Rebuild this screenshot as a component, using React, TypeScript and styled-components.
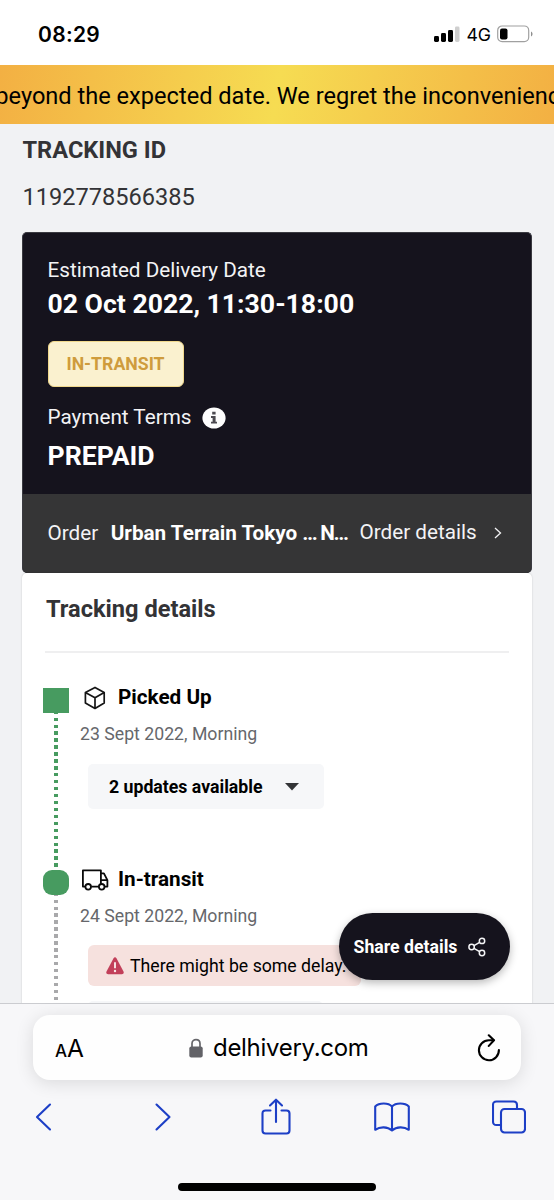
import React from 'react';
import styled, { createGlobalStyle } from 'styled-components';

const Global = createGlobalStyle`
  * { box-sizing: border-box; }
  body { margin: 0; background: #f1f2f4; font-family: Roboto, "Liberation Sans", sans-serif; }
  svg { display: block; flex: none; }
`;

const Screen = styled.div`
  position: relative;
  width: 554px;
  height: 1200px;
  overflow: hidden;
  display: flex;
  flex-direction: column;
  background: #f1f2f4;
`;

const Text = styled.div<{ $size: number; $line: number; $weight?: number; $color?: string; $spacing?: number }>`
  font-size: ${p => p.$size}px;
  line-height: ${p => p.$line}px;
  font-weight: ${p => p.$weight ?? 400};
  color: ${p => p.$color ?? '#000'};
  letter-spacing: ${p => p.$spacing ?? 0}px;
  white-space: nowrap;
`;

const StatusBar = styled.header`
  flex: none;
  height: 65px;
  padding: 20px 21px 0 38px;
  display: flex;
  justify-content: space-between;
  align-items: flex-start;
  background: #fff;
  font-family: Inter, sans-serif;
`;

const StatusIcons = styled.div`
  height: 28px;
  display: flex;
  align-items: center;
`;

const Network = styled(Text)`
  margin: 1px 6px 0 6px;
`;

const Banner = styled.div`
  flex: none;
  height: 59px;
  padding: 3px 0 0 14px;
  display: flex;
  align-items: center;
  justify-content: center;
  overflow: hidden;
  background: linear-gradient(100deg, #f3b043 0%, #f6dc52 50%, #f3b043 100%);
`;

const Content = styled.main`
  flex: 1;
  min-height: 0;
  overflow: hidden;
  padding: 11px 22px 0;
`;

const IdBlock = styled.section`
  height: 97px;
  padding-left: 0.5px;
  display: flex;
  flex-direction: column;
  gap: 17px;
`;

const SummaryCard = styled.section`
  height: 341px;
  border-radius: 5px;
  overflow: hidden;
  background: #15131d;
  border: 1px solid #3a3a40;
  border-width: 1px 1px 0;
`;

const SummaryBody = styled.div`
  height: 261px;
  padding: 22px 25px 0 24.5px;
  display: flex;
  flex-direction: column;
  align-items: flex-start;
`;

const Badge = styled.div`
  width: 136px;
  height: 46px;
  margin: 19px 0 16px 0;
  display: flex;
  align-items: center;
  justify-content: center;
  border: 1.5px solid #f0d88c;
  border-radius: 6px;
  background: #faf1cf;
`;

const TermsRow = styled.div`
  display: flex;
  align-items: center;
  gap: 10px;
  margin-bottom: 10px;
`;

const OrderBar = styled.div`
  height: 79px;
  padding: 0 29px 2px 24.5px;
  display: flex;
  align-items: center;
  background: #353536;
`;

const OrderName = styled(Text)`
  margin: 0 12px 0 12.5px;
`;

const Truncated = styled.span`
  letter-spacing: -1.3px;
`;

const OrderLink = styled(Text)`
  margin-top: -2px;
`;

const Chevron = styled.span`
  margin-left: auto;
`;

const DetailsCard = styled.section`
  height: 440px;
  padding: 22px 23px 0 21px;
  background: #fff;
  border-radius: 5px 5px 0 0;
  box-shadow: 0 0 2px rgba(0, 0, 0, 0.18);
`;

const Heading = styled.div`
  height: 58px;
  margin-left: 2px;
  padding-left: 1px;
  border-bottom: 2px solid #efeff0;
`;

const Step = styled.article`
  display: flex;
  height: 182px;
`;

const Timeline = styled.div`
  padding-top: 35px;
  margin-bottom: -35px;
  width: 26px;
  display: flex;
  flex-direction: column;
  align-items: center;
`;

const Marker = styled.span<{ $round?: boolean }>`
  flex: none;
  width: 26px;
  height: 25px;
  border-radius: ${p => (p.$round ? 9 : 0)}px;
  background: #479b60;
`;

const Dots = styled.span<{ $color: string }>`
  flex: 1;
  width: 4px;
  background: repeating-linear-gradient(to bottom, ${p => p.$color} 0 1px, transparent 1px 4.6px, ${p => p.$color} 4.6px 6.94px);
`;

const StepBody = styled.div`
  padding: 31px 0 0 11px;
`;

const StepTitle = styled.div`
  display: flex;
  align-items: center;
  height: 26px;
`;

const IconSlot = styled.span`
  width: 38px;
  padding-top: 2px;
  display: flex;
`;

const StepDate = styled(Text)`
  margin-top: 12px;
`;

const Updates = styled.div`
  width: 236px;
  height: 45px;
  margin: 18px 0 0 8px;
  padding: 0 25px 0 21px;
  display: flex;
  align-items: center;
  justify-content: space-between;
  border-radius: 5px;
  background: #f6f7f9;
`;

const Alert = styled.div`
  width: 273px;
  height: 41px;
  margin: 17px 0 0 8px;
  padding-left: 18px;
  display: flex;
  align-items: center;
  gap: 6px;
  border-radius: 6px;
  background: #f6e1de;
`;

const NextPanel = styled.div`
  width: 235px;
  height: 20px;
  margin: 15px 0 0 8px;
  border-radius: 5px;
  background: #f6f7f9;
`;

const ShareButton = styled.button`
  position: absolute;
  left: 339px;
  top: 913px;
  width: 170.5px;
  height: 67px;
  padding: 0 24px 0 14.5px;
  display: flex;
  align-items: center;
  justify-content: space-between;
  border: 0;
  border-radius: 34px;
  background: #15131d;
  font-family: inherit;
  box-shadow: 0 3px 8px rgba(0, 0, 0, 0.28);
`;

const Browser = styled.footer`
  flex: none;
  height: 197px;
  padding: 11px 28px 0 33px;
  border-top: 1px solid #cbccd0;
  background: #f7f7f9;
  font-family: Inter, sans-serif;
`;

const AddressBar = styled.div`
  height: 65px;
  width: 488px;
  padding: 0 20px 0 22px;
  display: flex;
  align-items: center;
  justify-content: space-between;
  border-radius: 17px;
  background: #fefefe;
  box-shadow: 0 3px 18px rgba(0, 0, 0, 0.12);
`;

const TextSize = styled.div`
  display: flex;
  align-items: baseline;
  width: 134px;
  padding-top: 3px;
`;

const Host = styled.div`
  display: flex;
  align-items: center;
  gap: 10px;
  margin-right: auto;
`;

const Toolbar = styled.nav`
  height: 74px;
  width: 582px;
  margin-left: -48px;
  display: grid;
  grid-template-columns: repeat(5, 1fr);
  align-items: center;
  justify-items: center;
`;

const HomeIndicator = styled.div`
  width: 198px;
  height: 8px;
  margin: 29px 0 0 145px;
  border-radius: 4px;
  background: #000;
`;

const Signal = () => (
  <svg width="26" height="16" viewBox="0 0 26 16">
    <rect x="0" y="10" width="5" height="6" rx="1.4" />
    <rect x="7" y="7" width="5" height="9" rx="1.4" />
    <rect x="14" y="4" width="5" height="12" rx="1.4" />
    <rect x="21" y="0.5" width="4.5" height="15.5" rx="1.4" fill="#cfcfcf" />
  </svg>
);

const Battery = () => (
  <svg width="36" height="18" viewBox="0 0 36 18">
    <rect x="0.7" y="1" width="31" height="15.6" rx="4.4" fill="#fff" stroke="#a0a0a0" strokeWidth="1.2" />
    <rect x="3" y="3.4" width="7.5" height="11" rx="2" />
    <path d="M34 6.4c2 .8 2 4.2 0 5z" fill="#8f8f8f" />
  </svg>
);

const Info = () => (
  <svg width="24" height="24" viewBox="0 -2 24 24">
    <ellipse cx="12" cy="11" rx="11.6" ry="10.6" fill="#fdfdfd" />
    <path d="M10.2 4.8h3.4v2.7h-3.4zM9 9.1h4.6v5.6H15v1.9H9v-1.9h1.6V11H9z" fill="#4c4a50" />
  </svg>
);

const Box = () => (
  <svg width="22" height="24" viewBox="0 0 22 24" fill="none" stroke="#151515" strokeWidth="1.7" strokeLinejoin="round" style={{ marginLeft: 4 }}>
    <path d="M11 1.4 20.2 6.4V17L11 22.4 1.4 17V6.4zM1.4 6.6 11 11.8l9.2-5.2M11 11.8v10.4" />
  </svg>
);

const Truck = () => (
  <svg width="28" height="22" viewBox="0 0 28 22" fill="none" stroke="#0a0a0a" strokeWidth="1.8" strokeLinejoin="round" style={{ marginLeft: 1 }}>
    <path d="M4.2 17.6H1.9V1.4h18v16.2h-9.6M19.9 4.3h3l3.5 6.9v6.4h-2.6M19.9 11.2h6.3" />
    <circle cx="7.2" cy="17.8" r="2.8" fill="#fff" />
    <circle cx="20.7" cy="17.8" r="2.8" fill="#fff" />
  </svg>
);

const Warning = () => (
  <svg width="18" height="18" viewBox="0 0 18 18">
    <path d="M7.4 1.4q1.6-2.2 3.2 0l6.9 13.2q.9 2.6-1.6 2.7H2.1Q-.4 17.2 .5 14.6z" fill="#c2405a" />
    <path d="M9 5.2v6" stroke="#f9e9e8" strokeWidth="1.9" />
    <circle cx="9" cy="14" r="1.2" fill="#f9e9e8" />
  </svg>
);

const Share = () => (
  <svg width="18" height="20" viewBox="0 0 18 20" fill="none" stroke="#f4f4f6" strokeWidth="1.5">
    <circle cx="3.6" cy="10" r="2.7" />
    <circle cx="14" cy="3.9" r="2.7" />
    <circle cx="14" cy="16" r="2.7" />
    <path d="m6 8.6 5.6-3.3M6 11.4l5.6 3.3" />
  </svg>
);

const Lock = () => (
  <svg width="14" height="20" viewBox="0 0 14 20">
    <path d="M3 9.5V5.5C3 .2 11 .2 11 5.5v4" fill="none" stroke="#66666a" strokeWidth="1.7" />
    <rect x="0.3" y="8.6" width="13.4" height="11" rx="2" fill="#626267" />
  </svg>
);

const Reload = () => (
  <svg width="24" height="28" viewBox="0 0 24 28" fill="none" stroke="#000" strokeWidth="2.1" strokeLinecap="round" strokeLinejoin="round">
    <path d="M21.9 16A10 10 0 1 1 11.9 6.2H16.5" />
    <path d="m11.8 1.3 5.2 5-5.2 5.6" />
  </svg>
);

const blue = { fill: 'none', stroke: '#1d3fc6', strokeWidth: 2.1, strokeLinecap: 'round', strokeLinejoin: 'round' } as const;

const Back = () => (
  <svg width="18" height="28" viewBox="0 0 18 28" {...blue}><path d="M16 1.5 3 14l13 12.5" /></svg>
);
const Forward = () => (
  <svg width="24" height="28" viewBox="-6 0 24 28" {...blue}><path d="m2.5 1.5 13 12.5-13 12.5" /></svg>
);
const Upload = () => (
  <svg width="30" height="38" viewBox="0 0 30 38" {...blue}>
    <path d="M9.5 12.5H4.5Q1.5 12.5 1.5 15.5V32.5Q1.5 35.5 4.5 35.5H25.5Q28.5 35.5 28.5 32.5V15.5Q28.5 12.5 25.5 12.5H20.5M15 24V2M9 7.5l6-5.8 6 5.8" />
  </svg>
);
const Book = () => (
  <svg width="36" height="30" viewBox="0 0 36 30" {...blue}>
    <path d="M18 4.5C14.5.5 5 .5 1.2 4.5V27.8C6 24.5 13.5 24.5 18 28.5V4.5C21.5.5 31 .5 34.800 4.500V27.800C30 24.500 22.500 24.500 18 28.500" />
  </svg>
);
const Tabs = () => (
  <svg width="34" height="34" viewBox="0 0 34 34" {...blue}>
    <rect x="9" y="9" width="24" height="23.5" rx="3.5" />
    <path d="M8.5 25H4.5Q1 25 1 21.5V5Q1 1.5 4.5 1.5H21.500Q25 1.500 25 5V8.500" />
  </svg>
);

export default function App() {
  return (
    <Screen>
      <Global />
      <StatusBar>
        <Text $size={21} $line={29} $weight={600} $spacing={0.3}>08:29</Text>
        <StatusIcons>
          <Signal />
          <Network $size={17.7} $line={28}>4G</Network>
          <Battery />
        </StatusIcons>
      </StatusBar>
      <Banner>
        <Text $size={23.6} $line={59}>beyond the expected date. We regret the inconvenience</Text>
      </Banner>
      <Content>
        <IdBlock>
          <Text $size={23.6} $line={30} $weight={700} $color="#333336">TRACKING ID</Text>
          <Text $size={23.6} $line={30} $color="#333336">1192778566385</Text>
        </IdBlock>
        <SummaryCard>
          <SummaryBody>
            <Text $size={20.7} $line={31} $color="#f3f3f5">Estimated Delivery Date</Text>
            <Text $size={26.6} $line={36} $weight={700} $color="#fff">02 Oct 2022, 11:30-18:00</Text>
            <Badge><Text $size={17.7} $line={24} $weight={700} $color="#cf9c3c">IN-TRANSIT</Text></Badge>
            <TermsRow>
              <Text $size={20.7} $line={28} $color="#f3f3f5">Payment Terms</Text>
              <Info />
            </TermsRow>
            <Text $size={26.6} $line={30} $weight={700} $color="#fff">PREPAID</Text>
          </SummaryBody>
          <OrderBar>
            <Text $size={20.7} $line={28} $color="#f3f3f5">Order</Text>
            <OrderName $size={20.7} $line={28} $weight={700} $color="#fff">Urban Terrain Tokyo <Truncated>… N…</Truncated></OrderName>
            <OrderLink $size={20.7} $line={28} $color="#f3f3f5">Order details</OrderLink>
            <Chevron>
              <svg width="8" height="12" viewBox="0 0 8 12" fill="none" stroke="#f3f3f5" strokeWidth="1.3"><path d="m1 1 5.5 5L1 11" /></svg>
            </Chevron>
          </OrderBar>
        </SummaryCard>
        <DetailsCard>
          <Heading><Text $size={23.6} $line={28} $weight={700} $color="#333336">Tracking details</Text></Heading>
          <Step>
            <Timeline>
              <Marker />
              <Dots $color="#479b60" />
            </Timeline>
            <StepBody>
              <StepTitle>
                <IconSlot><Box /></IconSlot>
                <Text $size={20.7} $line={26} $weight={700}>Picked Up</Text>
              </StepTitle>
              <StepDate $size={17.7} $line={24} $color="#66676b">23 Sept 2022, Morning</StepDate>
              <Updates>
                <Text $size={17.7} $line={24} $weight={700}>2 updates available</Text>
                <svg width="14" height="8" viewBox="0 0 14 8"><path d="M0 0h14L7 7.5z" fill="#333437" /></svg>
              </Updates>
            </StepBody>
          </Step>
          <Step>
            <Timeline>
              <Marker $round />
              <Dots $color="#a9a9ab" />
            </Timeline>
            <StepBody>
              <StepTitle>
                <IconSlot><Truck /></IconSlot>
                <Text $size={20.7} $line={26} $weight={700}>In-transit</Text>
              </StepTitle>
              <StepDate $size={17.7} $line={24} $color="#66676b">24 Sept 2022, Morning</StepDate>
              <Alert>
                <Warning />
                <Text $size={17.7} $line={24}>There might be some delay.</Text>
              </Alert>
              <NextPanel />
            </StepBody>
          </Step>
        </DetailsCard>
      </Content>
      <ShareButton>
        <Text $size={17.7} $line={24} $weight={700} $color="#fff">Share details</Text>
        <Share />
      </ShareButton>
      <Browser>
        <AddressBar>
          <TextSize>
            <Text $size={17} $line={30} $weight={500}>A</Text>
            <Text $size={24.5} $line={30}>A</Text>
          </TextSize>
          <Host>
            <Lock />
            <Text $size={24} $line={32} $spacing={-0.3}>delhivery.com</Text>
          </Host>
          <Reload />
        </AddressBar>
        <Toolbar>
          <Back />
          <Forward />
          <Upload />
          <Book />
          <Tabs />
        </Toolbar>
        <HomeIndicator />
      </Browser>
    </Screen>
  );
}
